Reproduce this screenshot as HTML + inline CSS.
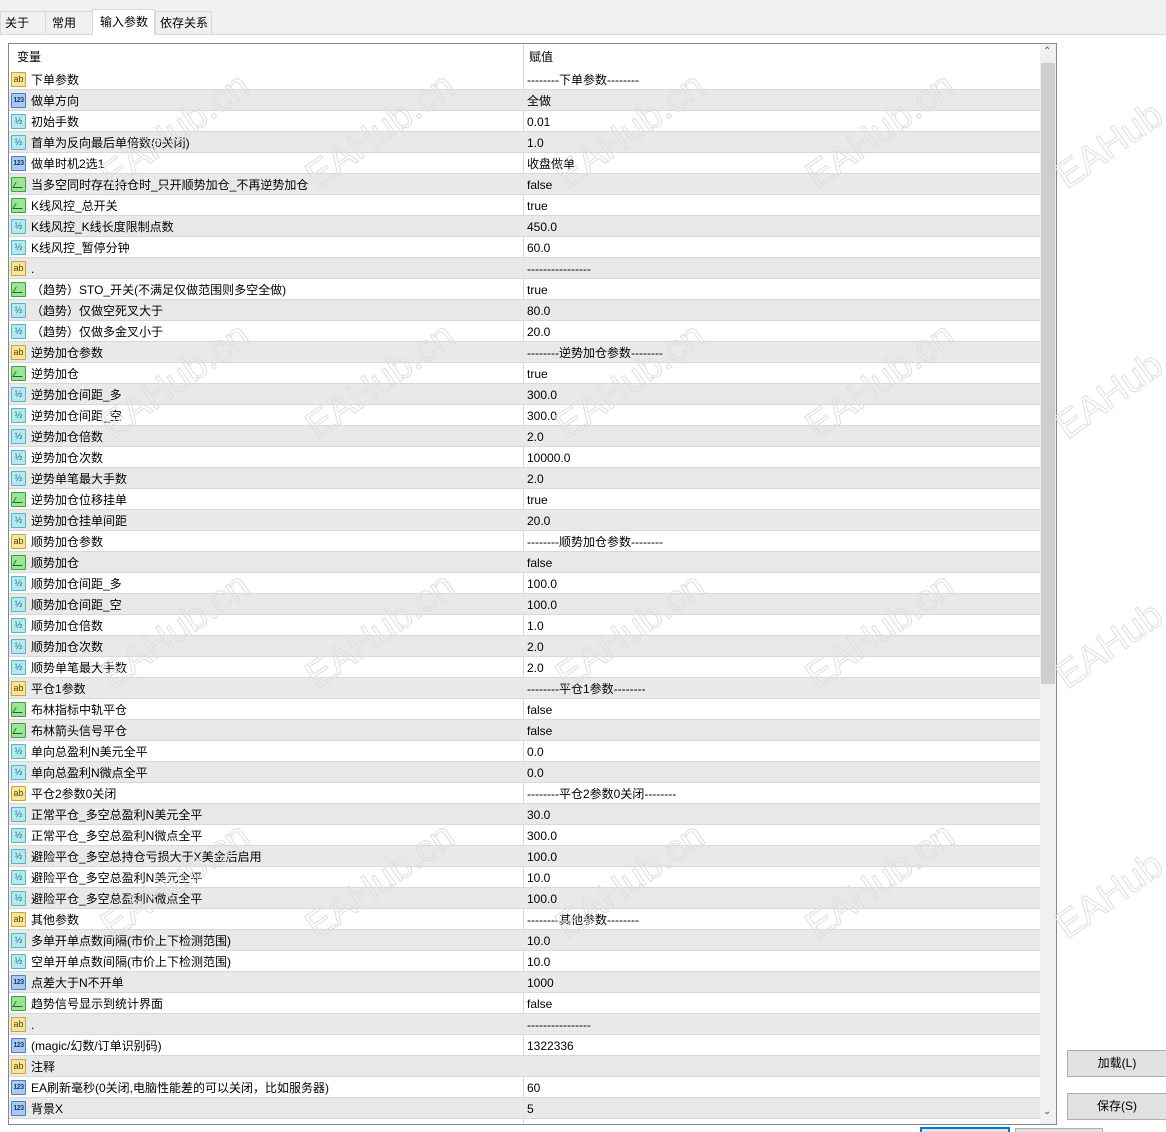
<!DOCTYPE html><html><head><meta charset="utf-8"><style>
html,body{margin:0;width:1166px;height:1132px;overflow:hidden}
body{background:#fff;font-family:"Liberation Sans","Noto Sans CJK SC",sans-serif;font-size:12px;color:#000;position:relative}
.tabbar{position:absolute;left:0;top:0;width:1166px;height:34px;background:#f0f0f0;border-bottom:1px solid #d9d9d9}
.tab{position:absolute;top:11px;height:23px;line-height:22px;border:1px solid #d9d9d9;border-bottom:none;background:#f0f0f0;padding:0 4px;box-sizing:border-box;white-space:nowrap}
.tab.act{top:9px;height:26px;background:#fff;line-height:24px}
.tbl{position:absolute;left:8px;top:43px;width:1049px;height:1082px;border:1px solid #828790;box-sizing:border-box;overflow:hidden}
.hdr{position:absolute;left:0;top:0;width:1031px;height:24px;line-height:26px}
.r{position:absolute;left:0;width:1031px;height:21px;line-height:22px;border-bottom:1px solid #d8d8d8;box-sizing:border-box}
.r.s{background:#e9e9e9}
.n{position:absolute;left:22px}
.v{position:absolute;left:518px}
.col{position:absolute;left:514px;top:0;width:1px;height:1082px;background:#d8d8d8}
.ic{position:absolute;left:2px;top:3px;width:15px;height:15px;box-sizing:border-box;border:1px solid;border-radius:1px;font-size:9px;line-height:13px;text-align:center;font-family:"Liberation Sans",sans-serif}
.ab{background:#f6e59a;border-color:#c7a63a;color:#5a4300}
.nu{background:#a9c9ee;border-color:#4c7fc0;color:#1b3f7a;font-size:7px;letter-spacing:-0.5px;font-weight:bold}
.fr{background:#b6e8f0;border-color:#58b4c6;color:#17707e}
.bo{background:#9be596;border-color:#3f9f3f}
.bo::after{content:"";position:absolute;left:2px;top:4px;width:9px;height:5px;border-bottom:1px solid #1f6b1f;border-left:1px solid #1f6b1f;transform:skewX(-30deg)}
.sb{position:absolute;left:1031px;top:0;width:16px;height:1080px;background:#f0f0f0}
.th{position:absolute;left:1px;top:19px;width:14px;height:621px;background:#cdcdcd}
.btn{position:absolute;left:1067px;width:100px;height:27px;background:#e1e1e1;border:1px solid #adadad;box-sizing:border-box;text-align:center;line-height:25px}
.wm{position:absolute;font-size:38px;color:transparent;-webkit-text-stroke:1px #dedede;transform:rotate(-35deg);white-space:nowrap;font-family:"Liberation Sans",sans-serif;pointer-events:none}
</style></head><body>
<div class="tabbar">
<div class="tab" style="left:0;width:46px">关于</div>
<div class="tab" style="left:45px;width:48px;padding-left:6px">常用</div>
<div class="tab act" style="left:92px;width:63px;padding-left:7px">输入参数</div>
<div class="tab" style="left:155px;width:57px;padding-left:4px">依存关系</div>
</div>
<div class="tbl">
<div class="hdr"><span style="position:absolute;left:8px">变量</span><span style="position:absolute;left:520px">赋值</span></div>
<div class="col"></div>
<div class="r" style="top:25px"><span class="ic ab">ab</span><span class="n">下单参数</span><span class="v">--------下单参数--------</span></div>
<div class="r s" style="top:46px"><span class="ic nu">123</span><span class="n">做单方向</span><span class="v">全做</span></div>
<div class="r" style="top:67px"><span class="ic fr">½</span><span class="n">初始手数</span><span class="v">0.01</span></div>
<div class="r s" style="top:88px"><span class="ic fr">½</span><span class="n">首单为反向最后单倍数(0关闭)</span><span class="v">1.0</span></div>
<div class="r" style="top:109px"><span class="ic nu">123</span><span class="n">做单时机2选1</span><span class="v">收盘做单</span></div>
<div class="r s" style="top:130px"><span class="ic bo"></span><span class="n">当多空同时存在持仓时_只开顺势加仓_不再逆势加仓</span><span class="v">false</span></div>
<div class="r" style="top:151px"><span class="ic bo"></span><span class="n">K线风控_总开关</span><span class="v">true</span></div>
<div class="r s" style="top:172px"><span class="ic fr">½</span><span class="n">K线风控_K线长度限制点数</span><span class="v">450.0</span></div>
<div class="r" style="top:193px"><span class="ic fr">½</span><span class="n">K线风控_暂停分钟</span><span class="v">60.0</span></div>
<div class="r s" style="top:214px"><span class="ic ab">ab</span><span class="n">.</span><span class="v">----------------</span></div>
<div class="r" style="top:235px"><span class="ic bo"></span><span class="n">（趋势）STO_开关(不满足仅做范围则多空全做)</span><span class="v">true</span></div>
<div class="r s" style="top:256px"><span class="ic fr">½</span><span class="n">（趋势）仅做空死叉大于</span><span class="v">80.0</span></div>
<div class="r" style="top:277px"><span class="ic fr">½</span><span class="n">（趋势）仅做多金叉小于</span><span class="v">20.0</span></div>
<div class="r s" style="top:298px"><span class="ic ab">ab</span><span class="n">逆势加仓参数</span><span class="v">--------逆势加仓参数--------</span></div>
<div class="r" style="top:319px"><span class="ic bo"></span><span class="n">逆势加仓</span><span class="v">true</span></div>
<div class="r s" style="top:340px"><span class="ic fr">½</span><span class="n">逆势加仓间距_多</span><span class="v">300.0</span></div>
<div class="r" style="top:361px"><span class="ic fr">½</span><span class="n">逆势加仓间距_空</span><span class="v">300.0</span></div>
<div class="r s" style="top:382px"><span class="ic fr">½</span><span class="n">逆势加仓倍数</span><span class="v">2.0</span></div>
<div class="r" style="top:403px"><span class="ic fr">½</span><span class="n">逆势加仓次数</span><span class="v">10000.0</span></div>
<div class="r s" style="top:424px"><span class="ic fr">½</span><span class="n">逆势单笔最大手数</span><span class="v">2.0</span></div>
<div class="r" style="top:445px"><span class="ic bo"></span><span class="n">逆势加仓位移挂单</span><span class="v">true</span></div>
<div class="r s" style="top:466px"><span class="ic fr">½</span><span class="n">逆势加仓挂单间距</span><span class="v">20.0</span></div>
<div class="r" style="top:487px"><span class="ic ab">ab</span><span class="n">顺势加仓参数</span><span class="v">--------顺势加仓参数--------</span></div>
<div class="r s" style="top:508px"><span class="ic bo"></span><span class="n">顺势加仓</span><span class="v">false</span></div>
<div class="r" style="top:529px"><span class="ic fr">½</span><span class="n">顺势加仓间距_多</span><span class="v">100.0</span></div>
<div class="r s" style="top:550px"><span class="ic fr">½</span><span class="n">顺势加仓间距_空</span><span class="v">100.0</span></div>
<div class="r" style="top:571px"><span class="ic fr">½</span><span class="n">顺势加仓倍数</span><span class="v">1.0</span></div>
<div class="r s" style="top:592px"><span class="ic fr">½</span><span class="n">顺势加仓次数</span><span class="v">2.0</span></div>
<div class="r" style="top:613px"><span class="ic fr">½</span><span class="n">顺势单笔最大手数</span><span class="v">2.0</span></div>
<div class="r s" style="top:634px"><span class="ic ab">ab</span><span class="n">平仓1参数</span><span class="v">--------平仓1参数--------</span></div>
<div class="r" style="top:655px"><span class="ic bo"></span><span class="n">布林指标中轨平仓</span><span class="v">false</span></div>
<div class="r s" style="top:676px"><span class="ic bo"></span><span class="n">布林箭头信号平仓</span><span class="v">false</span></div>
<div class="r" style="top:697px"><span class="ic fr">½</span><span class="n">单向总盈利N美元全平</span><span class="v">0.0</span></div>
<div class="r s" style="top:718px"><span class="ic fr">½</span><span class="n">单向总盈利N微点全平</span><span class="v">0.0</span></div>
<div class="r" style="top:739px"><span class="ic ab">ab</span><span class="n">平仓2参数0关闭</span><span class="v">--------平仓2参数0关闭--------</span></div>
<div class="r s" style="top:760px"><span class="ic fr">½</span><span class="n">正常平仓_多空总盈利N美元全平</span><span class="v">30.0</span></div>
<div class="r" style="top:781px"><span class="ic fr">½</span><span class="n">正常平仓_多空总盈利N微点全平</span><span class="v">300.0</span></div>
<div class="r s" style="top:802px"><span class="ic fr">½</span><span class="n">避险平仓_多空总持仓亏损大于X美金后启用</span><span class="v">100.0</span></div>
<div class="r" style="top:823px"><span class="ic fr">½</span><span class="n">避险平仓_多空总盈利N美元全平</span><span class="v">10.0</span></div>
<div class="r s" style="top:844px"><span class="ic fr">½</span><span class="n">避险平仓_多空总盈利N微点全平</span><span class="v">100.0</span></div>
<div class="r" style="top:865px"><span class="ic ab">ab</span><span class="n">其他参数</span><span class="v">--------其他参数--------</span></div>
<div class="r s" style="top:886px"><span class="ic fr">½</span><span class="n">多单开单点数间隔(市价上下检测范围)</span><span class="v">10.0</span></div>
<div class="r" style="top:907px"><span class="ic fr">½</span><span class="n">空单开单点数间隔(市价上下检测范围)</span><span class="v">10.0</span></div>
<div class="r s" style="top:928px"><span class="ic nu">123</span><span class="n">点差大于N不开单</span><span class="v">1000</span></div>
<div class="r" style="top:949px"><span class="ic bo"></span><span class="n">趋势信号显示到统计界面</span><span class="v">false</span></div>
<div class="r s" style="top:970px"><span class="ic ab">ab</span><span class="n">.</span><span class="v">----------------</span></div>
<div class="r" style="top:991px"><span class="ic nu">123</span><span class="n">(magic/幻数/订单识别码)</span><span class="v">1322336</span></div>
<div class="r s" style="top:1012px"><span class="ic ab">ab</span><span class="n">注释</span><span class="v"></span></div>
<div class="r" style="top:1033px"><span class="ic nu">123</span><span class="n">EA刷新毫秒(0关闭,电脑性能差的可以关闭，比如服务器)</span><span class="v">60</span></div>
<div class="r s" style="top:1054px"><span class="ic nu">123</span><span class="n">背景X</span><span class="v">5</span></div>
<div class="sb"><div style="position:absolute;top:2px;left:3px;font-size:10px;color:#555">&#8963;</div><div class="th"></div><div style="position:absolute;top:1062px;left:3px;font-size:10px;color:#555">&#8964;</div></div>
</div>
<div class="wm" style="left:90px;top:110px">EAHub.cn</div>
<div class="wm" style="left:295px;top:110px">EAHub.cn</div>
<div class="wm" style="left:545px;top:110px">EAHub.cn</div>
<div class="wm" style="left:795px;top:110px">EAHub.cn</div>
<div class="wm" style="left:1045px;top:110px">EAHub.cn</div>
<div class="wm" style="left:90px;top:360px">EAHub.cn</div>
<div class="wm" style="left:295px;top:360px">EAHub.cn</div>
<div class="wm" style="left:545px;top:360px">EAHub.cn</div>
<div class="wm" style="left:795px;top:360px">EAHub.cn</div>
<div class="wm" style="left:1045px;top:360px">EAHub.cn</div>
<div class="wm" style="left:90px;top:610px">EAHub.cn</div>
<div class="wm" style="left:295px;top:610px">EAHub.cn</div>
<div class="wm" style="left:545px;top:610px">EAHub.cn</div>
<div class="wm" style="left:795px;top:610px">EAHub.cn</div>
<div class="wm" style="left:1045px;top:610px">EAHub.cn</div>
<div class="wm" style="left:90px;top:860px">EAHub.cn</div>
<div class="wm" style="left:295px;top:860px">EAHub.cn</div>
<div class="wm" style="left:545px;top:860px">EAHub.cn</div>
<div class="wm" style="left:795px;top:860px">EAHub.cn</div>
<div class="wm" style="left:1045px;top:860px">EAHub.cn</div>
<div class="btn" style="top:1050px">加载(L)</div>
<div class="btn" style="top:1093px">保存(S)</div>
<div style="position:absolute;left:920px;top:1127px;width:86px;height:6px;border:2px solid #0078d7;background:#e1e1e1"></div>
<div style="position:absolute;left:1015px;top:1128px;width:86px;height:6px;border:1px solid #adadad;background:#e1e1e1"></div>
</body></html>
